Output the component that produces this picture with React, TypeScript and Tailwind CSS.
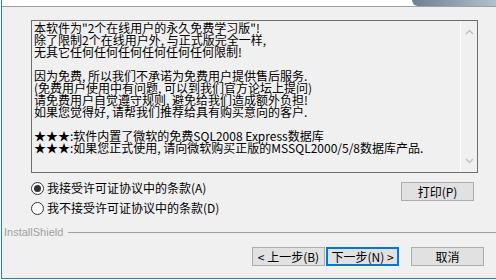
import React from 'react';

const lines = [
  '本软件为"2个在线用户的永久免费学习版"!',
  '除了限制2个在线用户外, 与正式版完全一样,',
  '无其它任何任何任何任何任何任何限制!',
  '',
  '因为免费, 所以我们不承诺为免费用户提供售后服务.',
  '(免费用户使用中有问题, 可以到我们官方论坛上提问)',
  '请免费用户自觉遵守规则, 避免给我们造成额外负担!',
  '如果您觉得好, 请帮我们推荐给具有购买意向的客户.',
  '',
  '★★★:软件内置了微软的免费SQL2008 Express数据库',
  '★★★:如果您正式使用, 请向微软购买正版的MSSQL2000/5/8数据库产品.',
];

const Radio = ({ checked, label }: { checked: boolean; label: string }) => (
  <div className="flex h-[20px] items-center">
    <span className="flex h-[13px] w-[13px] items-center justify-center rounded-full border border-[#333333] bg-white">
      {checked && <span className="h-[7px] w-[7px] rounded-full bg-[#333333]" />}
    </span>
    <span className="ml-[3px] text-[12px] leading-[12px] text-black">{label}</span>
  </div>
);

const Btn = ({ children, focused }: { children: React.ReactNode; focused?: boolean }) => (
  <button
    className={
      focused
        ? 'flex h-[19px] w-[73px] items-center justify-center border-2 border-[#0078d7] bg-[#e1e1e1] text-[12px] leading-[12px] text-black'
        : 'flex h-[19px] w-[73px] items-center justify-center border border-[#adadad] bg-[#e1e1e1] text-[12px] leading-[12px] text-black'
    }
  >
    {children}
  </button>
);

export default function App() {
  return (
    <div
      className="h-[280px] w-[496px] overflow-hidden bg-white pl-px"
      style={{ fontFamily: '"Noto Sans CJK SC", "Liberation Sans", sans-serif' }}
    >
      <div className="flex h-[279px] flex-col border-b border-l border-[#2b79d3] bg-[#f0f0f0]">
        {/* header strip */}
        <div className="flex h-[7px] justify-end border-b border-[#a0a0a0] bg-white">
          <div className="h-[6px] w-[84px] rounded-bl-[6px] bg-gradient-to-r from-[#6f8091] to-[#b4c0cc]" />
        </div>

        <div className="ml-[29px] mt-[13px] flex h-[153px] w-[447px] border border-[#6d6d6d]">
          <div className="flex-1 px-[2px] pt-[1px]">
            {lines.map((l, i) => (
              <div key={i} className="h-[12px] whitespace-nowrap text-[12px] leading-[12px] text-black">
                {l}
              </div>
            ))}
          </div>
          <div className="flex w-[17px] flex-col items-center justify-between border-l border-white py-[8px]">
            <svg width="9" height="6" viewBox="0 0 9 6">
              <path d="M1 5 L4.5 1.5 L8 5" fill="none" stroke="#c2c2c2" strokeWidth="1.5" />
            </svg>
            <svg width="9" height="6" viewBox="0 0 9 6">
              <path d="M1 1 L4.5 4.5 L8 1" fill="none" stroke="#c2c2c2" strokeWidth="1.5" />
            </svg>
          </div>
        </div>

        <div className="ml-[29px] mt-[5px] flex w-[447px] justify-between">
          <div className="flex flex-col">
            <Radio checked label="我接受许可证协议中的条款(A)" />
            <Radio checked={false} label="我不接受许可证协议中的条款(D)" />
          </div>
          <div className="mr-[4px] mt-[4px]">
            <Btn>打印(P)</Btn>
          </div>
        </div>

        <div className="mt-[7px] flex h-[14px] items-center pl-[2px]">
          <span className="text-[11px] leading-[14px] text-[#a0a0a0]" style={{ fontFamily: '"Liberation Sans", sans-serif' }}>
            InstallShield
          </span>
          <div className="ml-[5px] h-px flex-1 bg-[#a0a0a0]" />
        </div>

        <div className="mt-[8px] flex justify-end pr-[12px]">
          <Btn>&lt; 上一步(B)</Btn>
          <div className="ml-px">
            <Btn focused>下一步(N) &gt;</Btn>
          </div>
          <div className="ml-[12px]">
            <Btn>取消</Btn>
          </div>
        </div>
      </div>
    </div>
  );
}
